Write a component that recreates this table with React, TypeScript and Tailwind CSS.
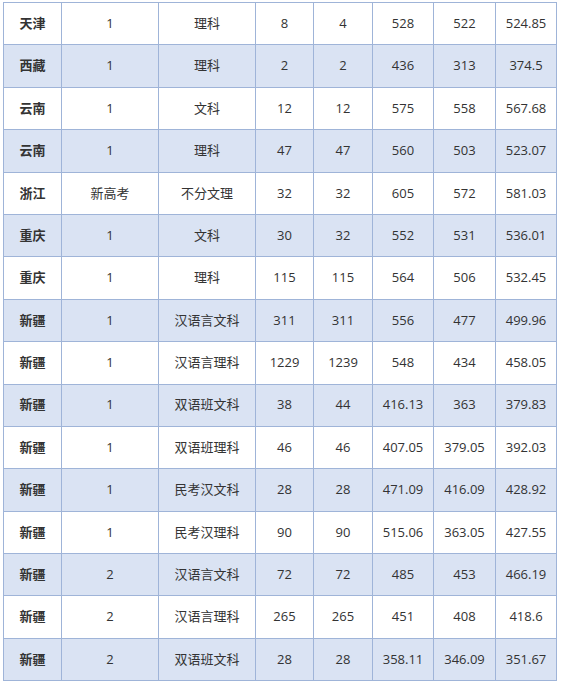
const rows: string[][] = [
  ["天津", "1", "理科", "8", "4", "528", "522", "524.85"],
  ["西藏", "1", "理科", "2", "2", "436", "313", "374.5"],
  ["云南", "1", "文科", "12", "12", "575", "558", "567.68"],
  ["云南", "1", "理科", "47", "47", "560", "503", "523.07"],
  ["浙江", "新高考", "不分文理", "32", "32", "605", "572", "581.03"],
  ["重庆", "1", "文科", "30", "32", "552", "531", "536.01"],
  ["重庆", "1", "理科", "115", "115", "564", "506", "532.45"],
  ["新疆", "1", "汉语言文科", "311", "311", "556", "477", "499.96"],
  ["新疆", "1", "汉语言理科", "1229", "1239", "548", "434", "458.05"],
  ["新疆", "1", "双语班文科", "38", "44", "416.13", "363", "379.83"],
  ["新疆", "1", "双语班理科", "46", "46", "407.05", "379.05", "392.03"],
  ["新疆", "1", "民考汉文科", "28", "28", "471.09", "416.09", "428.92"],
  ["新疆", "1", "民考汉理科", "90", "90", "515.06", "363.05", "427.55"],
  ["新疆", "2", "汉语言文科", "72", "72", "485", "453", "466.19"],
  ["新疆", "2", "汉语言理科", "265", "265", "451", "408", "418.6"],
  ["新疆", "2", "双语班文科", "28", "28", "358.11", "346.09", "351.67"],
];

const widths = [
  "w-[58px]",
  "w-[97px]",
  "w-[97px]",
  "w-[58px]",
  "w-[59px]",
  "w-[61px]",
  "w-[62px]",
  "w-[61px]",
];

export default function App() {
  return (
    <div className="w-[561px] h-[682px] overflow-hidden bg-white pt-[2px] pl-[3px]">
      <div
        className="inline-flex flex-col border-l border-t border-[#9fb4d8] text-[13px] text-[#333333]"
        style={{ fontFamily: '"Open Sans", "Noto Sans CJK SC", sans-serif' }}
      >
        {rows.map((r, i) => (
          <div
            key={i}
            className={`flex h-[42.4px] shrink-0 ${i % 2 === 1 ? "bg-[#dae3f3]" : "bg-white"}`}
          >
            {r.map((c, j) => (
              <div
                key={j}
                className={`${widths[j]} flex items-center justify-center border-r border-b border-[#9fb4d8] ${
                  j === 0 ? "font-bold" : ""
                }`}
              >
                {c}
              </div>
            ))}
          </div>
        ))}
      </div>
    </div>
  );
}
